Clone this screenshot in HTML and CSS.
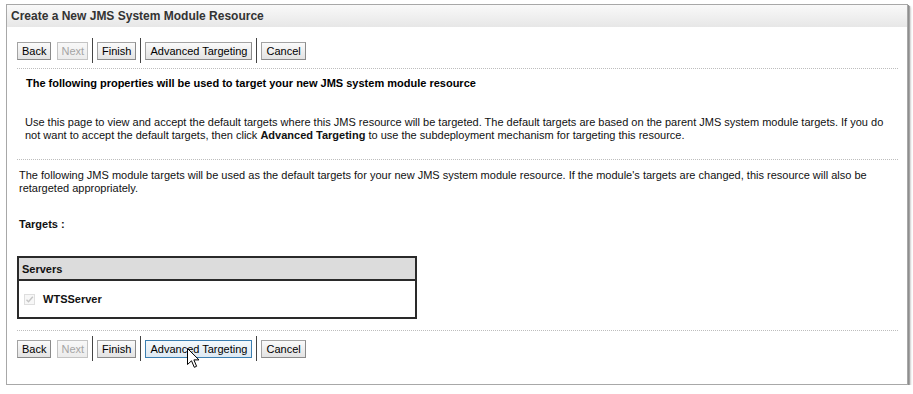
FILE: index.html
```html
<!DOCTYPE html>
<html lang="en">
<head>
  <meta charset="UTF-8">
  <title>Create a New JMS System Module Resource</title>
  <link rel="stylesheet" href="styles.css">
</head>
<body>
  <div class="frame">
    <div class="frame-title">Create a New JMS System Module Resource</div>
    <div class="frame-body">
      <div class="toolbar">
        <button class="btn">Back</button>
        <button class="btn" disabled>Next</button>
        <span class="sep"></span>
        <button class="btn">Finish</button>
        <span class="sep"></span>
        <button class="btn">Advanced Targeting</button>
        <span class="sep"></span>
        <button class="btn">Cancel</button>
      </div>

      <div class="intro">
        <h2>The following properties will be used to target your new JMS system module resource</h2>
        <p>Use this page to view and accept the default targets where this JMS resource will be targeted. The default targets are based on the parent JMS system module targets. If you do not want to accept the default targets, then click <b>Advanced Targeting</b> to use the subdeployment mechanism for targeting this resource.</p>
      </div>

      <p class="note">The following JMS module targets will be used as the default targets for your new JMS system module resource. If the module's targets are changed, this resource will also be retargeted appropriately.</p>

      <div class="targets-label">Targets :</div>

      <table class="targets">
        <tr><th>Servers</th></tr>
        <tr>
          <td>
            <span class="check">
              <svg width="9" height="9" viewBox="0 0 9 9"><path d="M1.5 4.8 L3.5 6.8 L7.8 1.8" fill="none" stroke="#c4c4c4" stroke-width="1.4"/></svg>
            </span>
            <b>WTSServer</b>
          </td>
        </tr>
      </table>

      <div class="toolbar bottom">
        <button class="btn">Back</button>
        <button class="btn" disabled>Next</button>
        <span class="sep"></span>
        <button class="btn">Finish</button>
        <span class="sep"></span>
        <span class="hover-wrap">
          <button class="btn hover">Advanced Targeting</button>
          <svg class="cursor" width="13" height="21" viewBox="0 0 13 21">
            <path d="M0.5 0.5 L0.5 16.5 L4.5 12.8 L7.3 19.3 L9.6 18.3 L6.9 11.9 L12 11.9 Z" fill="#fff" stroke="#000" stroke-width="1" stroke-linejoin="miter"/>
          </svg>
        </span>
        <span class="sep"></span>
        <button class="btn">Cancel</button>
      </div>
    </div>
  </div>
</body>
</html>
```

FILE: styles.css
```css
body {
  margin: 0;
  background: #fff;
  font-family: "Liberation Sans", Arial, sans-serif;
  font-size: 11px;
  color: #111;
}

.frame {
  margin: 4px 0 0 6px;
  width: 900px;
  height: 379px;
  border: 1px solid #a8a8a8;
  box-shadow: 1px 1px 0 #8e8e8e, 2px 2px 1px #a4a4a4, 3px 3px 2px #dadada;
  background: #fff;
}

.frame-title {
  height: 22px;
  line-height: 22px;
  padding-left: 4px;
  font-weight: bold;
  font-size: 12px;
  color: #333;
  background: linear-gradient(#f9f9f9, #e7e7e7);
}

.frame-body {
  padding: 0 9px 0 10px;
}

.toolbar {
  display: flex;
  align-items: center;
  height: 25px;
  margin-top: 11px;
  padding-bottom: 5px;
  border-bottom: 1px dotted #bdbdbd;
}

.toolbar.bottom {
  margin-top: 0;
  padding-top: 5px;
  border-bottom: none;
}

.btn {
  height: 18px;
  padding: 0 4px;
  margin: 0;
  font-family: "Liberation Sans", Arial, sans-serif;
  font-size: 11px;
  color: #000;
  background: linear-gradient(#fbfbfb, #e3e3e3);
  border: 1px solid #a3a3a3;
  border-right-color: #8a8a8a;
  border-bottom-color: #8a8a8a;
  border-radius: 0;
}

.btn + .btn {
  margin-left: 6px;
}

.btn:disabled {
  padding: 0 3px;
  color: #a4a4a4;
  background: linear-gradient(#f8f8f8, #ececec);
  border-color: #c4c4c4;
}

.btn.hover {
  background: linear-gradient(#f4f9fd, #dde9f3);
  border-color: #3c7fb1;
}

.sep {
  width: 1px;
  height: 25px;
  margin: 0 4px;
  background: #444;
}

.hover-wrap {
  position: relative;
  display: flex;
}

.cursor {
  position: absolute;
  left: 42px;
  top: 8px;
}

.intro h2 {
  margin: 8px 0 0;
  padding-left: 9px;
  font-size: 11px;
  line-height: 13px;
  color: #000;
}

.intro p {
  margin: 26px 0 0;
  padding: 0 0 17px 8px;
  line-height: 13px;
  border-bottom: 1px dotted #bdbdbd;
}

.note {
  margin: 9px 0 0;
  padding-left: 2px;
  line-height: 13px;
}

.targets-label {
  margin: 23px 0 0 2px;
  font-weight: bold;
  line-height: 13px;
}

.targets {
  margin-top: 25px;
  width: 400px;
  border-collapse: collapse;
  border: 2px solid #2a2a2a;
}

.targets th {
  height: 21px;
  padding: 0 3px;
  text-align: left;
  font-size: 11px;
  background: #dcdcdc;
  border-bottom: 2px solid #2a2a2a;
}

.targets td {
  height: 36px;
  padding: 0 3px;
  font-size: 11px;
}

.targets td b {
  vertical-align: middle;
}

.check {
  display: inline-flex;
  align-items: center;
  justify-content: center;
  width: 11px;
  height: 11px;
  margin: 0 5px 0 2px;
  border: 1px solid #dedede;
  background: #f7f7f7;
  box-sizing: border-box;
  vertical-align: middle;
}

.targets + .toolbar {
  margin-top: 11px;
  border-top: 1px dotted #bdbdbd;
}
```
